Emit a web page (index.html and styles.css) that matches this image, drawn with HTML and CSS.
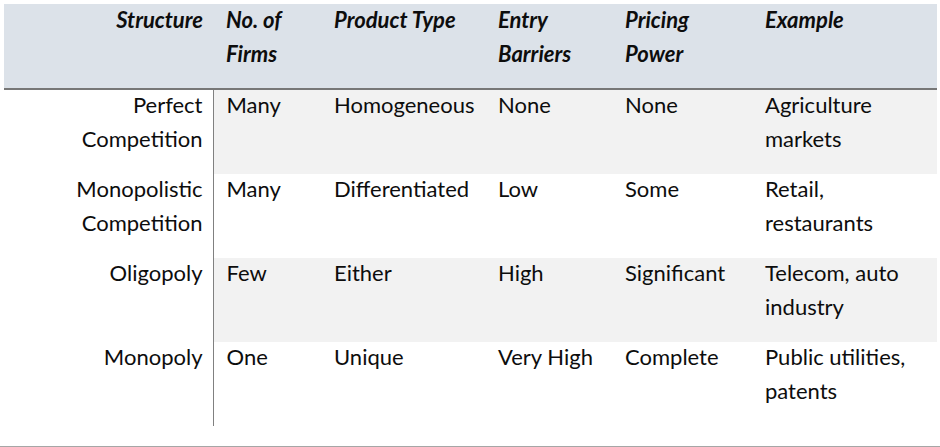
FILE: index.html
```html
<!DOCTYPE html>
<html lang="en">
<head>
<meta charset="utf-8">
<title>Market Structures</title>
<link rel="stylesheet" href="styles.css">
</head>
<body>
<div class="page">
  <table class="markets">
    <colgroup>
      <col class="c1"><col class="c2"><col class="c3"><col class="c4"><col class="c5"><col class="c6">
    </colgroup>
    <thead>
      <tr>
        <th class="first"><div class="txt">Structure</div></th>
        <th><div class="txt">No. of Firms</div></th>
        <th><div class="txt">Product Type</div></th>
        <th><div class="txt">Entry Barriers</div></th>
        <th><div class="txt">Pricing Power</div></th>
        <th><div class="txt">Example</div></th>
      </tr>
    </thead>
    <tbody>
      <tr class="shade">
        <td class="first"><div class="txt">Perfect Competition</div></td>
        <td><div class="txt">Many</div></td>
        <td><div class="txt">Homogeneous</div></td>
        <td><div class="txt">None</div></td>
        <td><div class="txt">None</div></td>
        <td><div class="txt">Agriculture markets</div></td>
      </tr>
      <tr>
        <td class="first"><div class="txt">Monopolistic Competition</div></td>
        <td><div class="txt">Many</div></td>
        <td><div class="txt">Differentiated</div></td>
        <td><div class="txt">Low</div></td>
        <td><div class="txt">Some</div></td>
        <td><div class="txt">Retail, restaurants</div></td>
      </tr>
      <tr class="shade">
        <td class="first"><div class="txt">Oligopoly</div></td>
        <td><div class="txt">Few</div></td>
        <td><div class="txt">Either</div></td>
        <td><div class="txt">High</div></td>
        <td><div class="txt">Significant</div></td>
        <td><div class="txt">Telecom, auto industry</div></td>
      </tr>
      <tr>
        <td class="first"><div class="txt">Monopoly</div></td>
        <td><div class="txt">One</div></td>
        <td><div class="txt">Unique</div></td>
        <td><div class="txt">Very High</div></td>
        <td><div class="txt">Complete</div></td>
        <td><div class="txt">Public utilities, patents</div></td>
      </tr>
    </tbody>
  </table>
</div>
</body>
</html>
```

FILE: styles.css
```css
html, body {
  margin: 0;
  padding: 0;
  background: #ffffff;
}

.page {
  width: 940px;
  height: 447px;
  box-sizing: border-box;
  padding: 4px 3px 0 4px;
  border-bottom: 1px solid #a6a6a6;
  font-family: Lato, "Liberation Sans", sans-serif;
  color: #0d0d0d;
}

.markets {
  border-collapse: collapse;
  table-layout: fixed;
  width: 933px;
  font-size: 22px;
  line-height: 34px;
}

.c1 { width: 209px; }
.c2 { width: 108px; }
.c3 { width: 164px; }
.c4 { width: 127px; }
.c5 { width: 140px; }
.c6 { width: 185px; }

.markets th,
.markets td {
  text-align: left;
  vertical-align: top;
  padding: 0 10px 16px 13px;
  height: 68px;
}

.markets .txt {
  margin-top: -2px;
}

.markets thead .txt {
  margin-top: -1px;
}

.markets thead th {
  background: #dce2e9;
  font-weight: 700;
  font-style: italic;
  border-bottom: 2px solid #777777;
}

.markets td {
  font-weight: 400;
}

.markets .first {
  text-align: right;
}

.markets tbody .first {
  border-right: 1px solid #808080;
  background: #ffffff;
}

.markets tr.shade td {
  background: #f2f2f2;
}

.markets tr.shade td.first {
  background: #ffffff;
}
```
